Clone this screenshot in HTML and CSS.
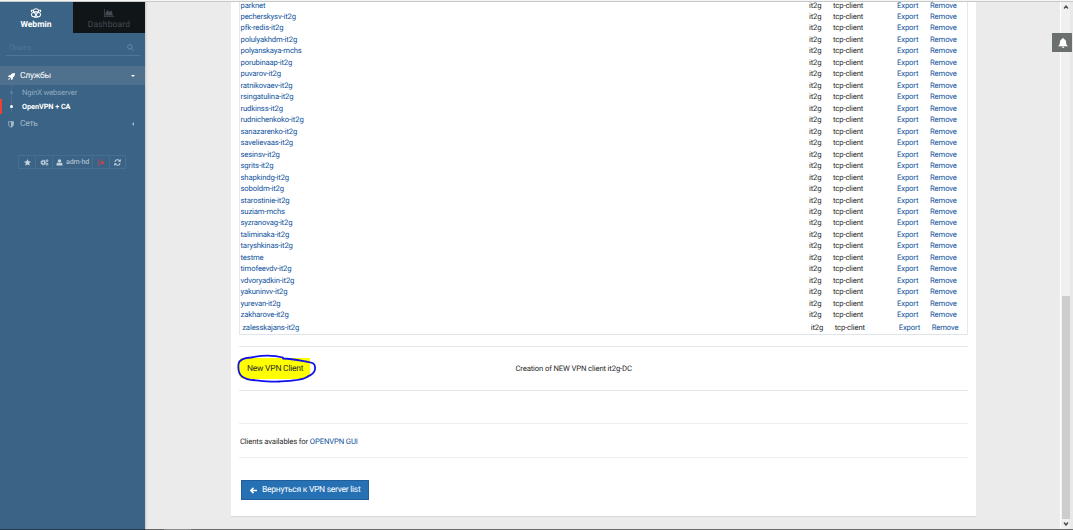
FILE: index.html
```
<!DOCTYPE html>
<html lang="ru">
<head>
<meta charset="utf-8">
<title>Webmin</title>
<link rel="stylesheet" href="styles.css">
</head>
<body>
<div class="app">
  <aside class="sidebar">
    <div class="tabs">
      <div class="tab tab-active">
        <svg class="tab-icon" viewBox="0 0 24 22" fill="none" stroke="currentColor" stroke-width="2.4"><path d="M8 10C4 6 7 1.500 12 1.500S20 6 16 10M8 10c-5-1-7 3-5.500 6.500S9 20 12 16.500c3 3.500 8 3.500 9.500 0S21 9 16 10M12 16.500c-1-3-2-5-4-6.500M12 16.500c1-3 2-5 4-6.500M8 8.500h8M6 5H2v4M18 5h4v4M8 20.500h8"/></svg>
        <span>Webmin</span>
      </div>
      <div class="tab tab-dark">
        <svg class="tab-icon chart" viewBox="0 0 20 16" fill="currentColor"><path d="M0 0h1.500v14.500H20V16H0zM3 13V8l4-6 4 4 4-3 3 10z"/></svg>
        <span>Dashboard</span>
      </div>
    </div>
    <div class="search"><span>Поиск</span><svg viewBox="0 0 16 16" fill="none" stroke="currentColor" stroke-width="2"><circle cx="6.500" cy="6.500" r="5"/><path d="M10.500 10.500L15 15"/></svg></div>
    <div class="group group-open">
      <svg class="group-icon" viewBox="0 0 16 16" fill="currentColor"><path d="M16 0C10 0 7.500 2 5.500 5H2L0 9h3.500l3.500 3.500V16l4-2v-3.500C14 8.500 16 6 16 0zM2.500 11L0 16l5-2.500z"/></svg>
      <span>Службы</span><i class="caret-down"></i>
    </div>
    <ul class="links">
      <li><span>NginX webserver</span></li>
      <li class="current"><span>OpenVPN + CA</span></li>
    </ul>
    <div class="group">
      <svg class="group-icon shield" viewBox="0 0 14 16"><path d="M1.500 1.500h11V8c0 3-2.500 5-5.500 6.500C4 13 1.500 11 1.500 8z" fill="none" stroke="currentColor" stroke-width="2"/><path d="M7 1h5.500v7c0 3-2.500 5-5.500 6.500z" fill="currentColor"/></svg>
      <span>Сеть</span><i class="caret-left"></i>
    </div>
    <div class="tools">
      <span class="tool w17"><svg viewBox="0 0 16 16" fill="currentColor"><path d="M8 0l2.400 5.300 5.600.7-4.200 3.900 1.200 5.800L8 12.800l-5 2.900 1.200-5.800L0 6l5.600-.7z"/></svg></span>
      <span class="tool w17"><svg class="wide" viewBox="0 0 19 16" fill="none" stroke="currentColor"><circle cx="6.500" cy="8" r="3.600" stroke-width="3"/><circle cx="6.500" cy="8" r="5.500" stroke-width="2" stroke-dasharray="2.300 2"/><circle cx="15" cy="4" r="2.200" stroke-width="2.200"/><circle cx="15" cy="12" r="2.200" stroke-width="2.200"/></svg></span>
      <span class="tool w39"><svg viewBox="0 0 14 16" fill="currentColor"><circle cx="7" cy="4.500" r="4"/><path d="M3 8c2 2 6 2 8 0 3 1 3 4 3 7H0c0-3 0-6 3-7z"/></svg>adm-hd</span>
      <span class="tool w17 red"><svg viewBox="0 0 16 14" fill="none" stroke="currentColor" stroke-width="2"><path d="M6 1H1v12h5"/><path d="M5 5h4V1l6 6-6 6V9H5z" fill="currentColor" stroke="none"/></svg></span>
      <span class="tool w17"><svg viewBox="0 0 16 16" fill="none" stroke="currentColor" stroke-width="2.300"><path d="M2 6.500C3 1 10 0 13.500 4.500M14 9.500C13 15 6 16 2.500 11.500"/><path d="M15.500 0v6.500H9zM.500 16V9.500H7z" fill="currentColor" stroke="none"/></svg></span>
    </div>
  </aside>

  <main class="content">
    <section class="card">
      <div class="clients">
        <div class="row"><a>parknet</a><span>it2g</span><span>tcp-client</span><a>Export</a><a>Remove</a></div>
        <div class="row"><a>pecherskysv-it2g</a><span>it2g</span><span>tcp-client</span><a>Export</a><a>Remove</a></div>
        <div class="row"><a>pfk-redis-it2g</a><span>it2g</span><span>tcp-client</span><a>Export</a><a>Remove</a></div>
        <div class="row"><a>polulyakhdm-it2g</a><span>it2g</span><span>tcp-client</span><a>Export</a><a>Remove</a></div>
        <div class="row"><a>polyanskaya-mchs</a><span>it2g</span><span>tcp-client</span><a>Export</a><a>Remove</a></div>
        <div class="row"><a>porubinaap-it2g</a><span>it2g</span><span>tcp-client</span><a>Export</a><a>Remove</a></div>
        <div class="row"><a>puvarov-it2g</a><span>it2g</span><span>tcp-client</span><a>Export</a><a>Remove</a></div>
        <div class="row"><a>ratnikovaev-it2g</a><span>it2g</span><span>tcp-client</span><a>Export</a><a>Remove</a></div>
        <div class="row"><a>rsingatulina-it2g</a><span>it2g</span><span>tcp-client</span><a>Export</a><a>Remove</a></div>
        <div class="row"><a>rudkinss-it2g</a><span>it2g</span><span>tcp-client</span><a>Export</a><a>Remove</a></div>
        <div class="row"><a>rudnichenkoko-it2g</a><span>it2g</span><span>tcp-client</span><a>Export</a><a>Remove</a></div>
        <div class="row"><a>sanazarenko-it2g</a><span>it2g</span><span>tcp-client</span><a>Export</a><a>Remove</a></div>
        <div class="row"><a>savelievaas-it2g</a><span>it2g</span><span>tcp-client</span><a>Export</a><a>Remove</a></div>
        <div class="row"><a>sesinsv-it2g</a><span>it2g</span><span>tcp-client</span><a>Export</a><a>Remove</a></div>
        <div class="row"><a>sgrits-it2g</a><span>it2g</span><span>tcp-client</span><a>Export</a><a>Remove</a></div>
        <div class="row"><a>shapkindg-it2g</a><span>it2g</span><span>tcp-client</span><a>Export</a><a>Remove</a></div>
        <div class="row"><a>soboldm-it2g</a><span>it2g</span><span>tcp-client</span><a>Export</a><a>Remove</a></div>
        <div class="row"><a>starostinie-it2g</a><span>it2g</span><span>tcp-client</span><a>Export</a><a>Remove</a></div>
        <div class="row"><a>suziam-mchs</a><span>it2g</span><span>tcp-client</span><a>Export</a><a>Remove</a></div>
        <div class="row"><a>syzranovag-it2g</a><span>it2g</span><span>tcp-client</span><a>Export</a><a>Remove</a></div>
        <div class="row"><a>taliminaka-it2g</a><span>it2g</span><span>tcp-client</span><a>Export</a><a>Remove</a></div>
        <div class="row"><a>taryshkinas-it2g</a><span>it2g</span><span>tcp-client</span><a>Export</a><a>Remove</a></div>
        <div class="row"><a>testme</a><span>it2g</span><span>tcp-client</span><a>Export</a><a>Remove</a></div>
        <div class="row"><a>timofeevdv-it2g</a><span>it2g</span><span>tcp-client</span><a>Export</a><a>Remove</a></div>
        <div class="row"><a>vdvoryadkin-it2g</a><span>it2g</span><span>tcp-client</span><a>Export</a><a>Remove</a></div>
        <div class="row"><a>yakuninvv-it2g</a><span>it2g</span><span>tcp-client</span><a>Export</a><a>Remove</a></div>
        <div class="row"><a>yurevan-it2g</a><span>it2g</span><span>tcp-client</span><a>Export</a><a>Remove</a></div>
        <div class="row"><a>zakharove-it2g</a><span>it2g</span><span>tcp-client</span><a>Export</a><a>Remove</a></div>
        <div class="row row-last"><a>zalesskajans-it2g</a><span>it2g</span><span>tcp-client</span><a>Export</a><a>Remove</a></div>
      </div>
      <div class="create">
        <div class="new-client">New VPN Client
          <svg class="ring" viewBox="0 0 80 30" fill="none" stroke="#1010e8" stroke-width="1.800" stroke-linecap="round"><path d="M46 3.500C36 .800 23 1.500 14 3.500C6 4 2 6 1.500 10C1 15 1.500 20 5 22.500C9 25 11 26.500 16 26C25 27 35 28 43 27.500C53 27 64 26.500 69 23.500C76 20 78.500 18 78 14C78.500 9 75 8.500 69 7.500C61 6 54 4.500 46 4.500"/></svg>
        </div>
        <span>Creation of NEW VPN client it2g-DC</span>
      </div>
      <div class="gui"><span>Clients availables for <a>OPENVPN GUI</a></span></div>
      <div class="back"><svg viewBox="0 0 16 14" fill="none" stroke="currentColor" stroke-width="3.500"><path d="M8 1L2 7l6 6M3 7h13"/></svg><span>Вернуться к VPN server list</span></div>
    </section>
  </main>

  <div class="scrollbar">
    <svg viewBox="0 0 6 4" fill="none" stroke="#505050" stroke-width="1.300"><path d="M1 3.500L3 1l2 2.500"/></svg>
    <div class="thumb"></div>
    <svg viewBox="0 0 6 4" fill="none" stroke="#505050" stroke-width="1.500"><path d="M1 .500L3 3 5 .500"/></svg>
  </div>
  <div class="edge"></div>
  <div class="bell"><svg viewBox="0 0 16 16" fill="#fff"><path d="M8 0c1 0 1.200.700 1.200 1.500C12 2 13 4.500 13 7c0 3 1 4.500 3 6H0c2-1.500 3-3 3-6 0-2.500 1-5 3.800-5.500C6.800.700 7 0 8 0zM6 14h4c0 2.500-4 2.500-4 0z"/></svg></div>
  <div class="topline"></div>
  <div class="bottomline"></div>
</div>
</body>
</html>
```
FILE: styles.css
```
* { box-sizing: border-box; }
body { margin: 0; }
.app {
  position: relative;
  display: flex;
  width: 1073px;
  height: 530px;
  overflow: hidden;
  background: #ebebeb;
  font: 7.7px/11px Roboto, "Noto Sans", sans-serif;
  letter-spacing: -.14px;
  text-rendering: geometricPrecision;
  color: #2c2c2c;
}
a { color: #10529c; }
svg { display: block; }

.sidebar { width: 145px; background: #3a6385; padding-top: 2px; box-shadow: 0 0 3px #aaa; }
.tabs { display: flex; height: 31px; }
.tab { width: 73px; display: flex; flex-direction: column; align-items: center; padding-top: 6px; font-size: 8.5px; line-height: 12px; letter-spacing: 0; }
.tab-active { color: #fff; font-weight: 700; padding-right: 1px; }
.tab-dark { width: 72px; background: #101518; color: #434c53; letter-spacing: .15px; }
.tab-icon { width: 12px; height: 10px; margin-bottom: 1px; }
.chart { width: 10px; height: 8px; margin: 1px 0 2px; }
.search {
  display: flex;
  justify-content: space-between;
  align-items: center;
  height: 16px;
  margin: 7px 5px 0 6px;
  padding: 0 6px 0 3px;
  border-bottom: 1px solid #4d7697;
  color: #507797;
  letter-spacing: 0;
}
.search svg { width: 7px; height: 7px; color: #6a8fac; }
.group { display: flex; align-items: center; height: 19px; padding: 1px 0 0 8px; color: #a5bacb; font-size: 8.5px; letter-spacing: -.25px; }
.group-open { margin-top: 10px; background: #50718e; color: #fff; }
.group-icon { width: 7px; height: 7px; margin-right: 5px; }
.shield { width: 6px; margin-right: 6px; }
.caret-down, .caret-left { margin-left: auto; border: 2px solid transparent; }
.caret-down { margin-right: 10px; border-top-color: #fff; border-bottom: 0; }
.caret-left { margin-right: 11px; border-right-color: #a5bacb; border-left: 0; }
.links { position: relative; margin: 0; padding: 0; list-style: none; color: #91abc0; letter-spacing: -.18px; }
.links::before { content: ""; position: absolute; left: 11px; top: 0; width: 1px; height: 28px; background: #4a7091; }
.links li { position: relative; display: flex; align-items: center; height: 14px; padding-left: 10px; }
.links li::before { content: ""; width: 3px; height: 3px; margin-right: 9px; border-radius: 50%; background: #57809f; }
.links .current { height: 15px; color: #fff; font-weight: 700; border-left: 2px solid #ea4335; padding-left: 8px; font-size: 7.3px; letter-spacing: -.05px; }
.links .current::before { background: #fff; }
.tools { display: flex; margin: 22px 0 0 18px; }
.tool { display: flex; align-items: center; justify-content: center; gap: 3px; height: 14px; border: 1px solid #456f90; border-right-width: 0; color: #c3d2df; font-size: 7px; letter-spacing: -.08px; }
.tool:last-child { border-right-width: 1px; }
.tool svg { width: 7px; height: 7px; }
.tool .wide { width: 9px; }
.w17 { width: 17px; }
.w39 { width: 40px; }
.red { color: #bc4850; }

.content { width: 916px; padding-left: 86px; }
.card { display: flow-root; width: 745px; height: 517px; padding: 0 8px; background: #fff; border-bottom: 1px solid #d8d8d8; }
.clients { display: flow-root; height: 335px; border: 1px solid #e6e9ea; border-top: 0; border-bottom-color: #dfe5e6; }
.row { display: grid; grid-template-columns: 568.500px 24px 64px 33px 36px; height: 11.470px; padding-left: .500px; align-items: center; line-height: 11px; white-space: nowrap; }
.row:first-child { margin-top: -.700px; }
.row-last { margin-top: 1.500px; padding-left: 2.200px; }
.create { display: flex; align-items: center; height: 45px; margin-top: 11px; border-top: 1px solid #e8e8e8; border-bottom: 1px solid #e8e8e8; }
.new-client { position: relative; width: 71px; height: 21px; margin-right: 205.500px; padding-left: 8px; background: #ff0; border-radius: 4px 1px 6px 5px; font-size: 8.500px; line-height: 22px; letter-spacing: -.240px; white-space: nowrap; }
.ring { position: absolute; left: -2px; top: -4px; width: 80px; height: 30px; }
.gui { display: flex; align-items: center; height: 35px; margin-top: 32px; border-top: 1px solid #eee; border-bottom: 1px solid #eee; padding: 1px 0 0 1px; }
.back { display: flex; align-items: center; width: 128px; height: 20px; margin: 22px 0 0 2px; padding-left: 8px; background: #2671b4; border: 1px solid #205f9b; color: #fff; font-size: 8.500px; letter-spacing: -.270px; white-space: nowrap; }
.back svg { width: 7px; height: 7px; margin-right: 5px; }

.scrollbar { display: flex; flex-direction: column; align-items: center; width: 9px; padding: 5px 0 4px; background: #f0f0f0; box-shadow: -1px 0 #fff; }
.scrollbar svg { width: 6px; height: 4px; }
.thumb { width: 8px; height: 223px; margin-top: auto; background: #cdcdcd; margin-bottom: 3px; }
.edge { width: 3px; background: #e9e9e9; }
.bell { position: absolute; right: 1px; top: 33px; width: 20px; height: 19px; padding: 5px 0 0 6px; background: #6b706f; }
.bell svg { width: 10px; height: 10px; }
.topline { position: absolute; left: 0; right: 0; top: 0; height: 2px; background: #f5f5f5; border-bottom: 1px solid #c6cac8; }
.bottomline { position: absolute; left: 0; right: 0; bottom: 0; height: 1px; background: linear-gradient(to right, #26394a 145px, #666 145px 164px, #8c8c8c 164px 191px, #6c6c6c 191px); }
```
